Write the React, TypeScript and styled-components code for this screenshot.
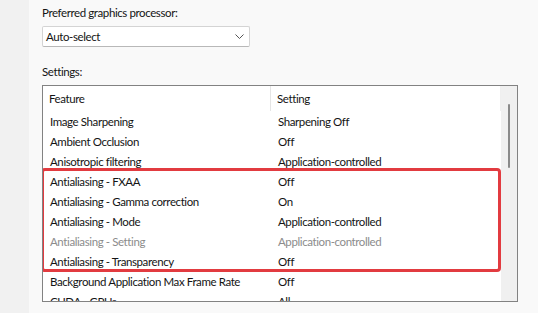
import { createGlobalStyle } from 'styled-components'
import styled from 'styled-components'

type Row = { feature: string; setting: string; disabled?: boolean }

const before: Row[] = [
  { feature: 'Image Sharpening', setting: 'Sharpening Off' },
  { feature: 'Ambient Occlusion', setting: 'Off' },
  { feature: 'Anisotropic filtering', setting: 'Application-controlled' },
]

const antialiasing: Row[] = [
  { feature: 'Antialiasing - FXAA', setting: 'Off' },
  { feature: 'Antialiasing - Gamma correction', setting: 'On' },
  { feature: 'Antialiasing - Mode', setting: 'Application-controlled' },
  { feature: 'Antialiasing - Setting', setting: 'Application-controlled', disabled: true },
  { feature: 'Antialiasing - Transparency', setting: 'Off' },
]

const after: Row[] = [
  { feature: 'Background Application Max Frame Rate', setting: 'Off' },
  { feature: 'CUDA - GPUs', setting: 'All' },
]

const GlobalStyle = createGlobalStyle`
  html, body {
    margin: 0;
    padding: 0;
    background: #f9f9f9;
  }
  body {
    font-family: Lato, 'Noto Sans', sans-serif;
    font-size: 11.5px;
    letter-spacing: -0.4px;
    color: #141414;
  }
`

function SettingRow({ row }: { row: Row }) {
  return (
    <RowLine $disabled={row.disabled}>
      <Cell>{row.feature}</Cell>
      <Cell>{row.setting}</Cell>
    </RowLine>
  )
}

export default function App() {
  return (
    <Page>
      <GlobalStyle />
      <SideStrip />
      <Main>
        <Label>Preferred graphics processor:</Label>
        <Select>
          <span>Auto-select</span>
          <svg width="9" height="5" viewBox="0 0 9 5">
            <path d="M0.5 0.5 L4.5 4.5 L8.5 0.5" fill="none" stroke="#555" strokeWidth="1" />
          </svg>
        </Select>
        <SettingsLabel>Settings:</SettingsLabel>
        <ListBox>
          <ListBody>
            <Header>
              <HeaderCell $first>Feature</HeaderCell>
              <HeaderCell>Setting</HeaderCell>
            </Header>
            {before.map((r) => (
              <SettingRow key={r.feature} row={r} />
            ))}
            <Highlight>
              {antialiasing.map((r) => (
                <SettingRow key={r.feature} row={r} />
              ))}
            </Highlight>
            {after.map((r) => (
              <SettingRow key={r.feature} row={r} />
            ))}
          </ListBody>
          <ScrollTrack>
            <ScrollThumb />
          </ScrollTrack>
        </ListBox>
      </Main>
    </Page>
  )
}

const Page = styled.div`
  display: flex;
  width: 538px;
  height: 313px;
  overflow: hidden;
`

const SideStrip = styled.div`
  width: 29px;
  flex: none;
  background: #f1f1f1;
`

const Main = styled.div`
  flex: 1;
  display: flex;
  flex-direction: column;
  padding: 5px 0 0 13px;
`

const Label = styled.div`
  height: 16px;
  line-height: 16px;
`

const Select = styled.div`
  margin-top: 5px;
  width: 198px;
  height: 19px;
  border: 1px solid #d4d4d4;
  border-bottom-color: #b8b8b8;
  border-radius: 2px;
  background: #fff;
  display: flex;
  align-items: center;
  justify-content: space-between;
  padding: 0 5px 0 3px;
`

const SettingsLabel = styled.div`
  margin-top: 17px;
  height: 16px;
  line-height: 16px;
`

const ListBox = styled.div`
  margin-top: 5px;
  width: 474px;
  height: 215px;
  border: 1px solid #828282;
  background: #fff;
  display: flex;
  overflow: hidden;
`

const ListBody = styled.div`
  flex: 1;
  display: flex;
  flex-direction: column;
`

const Header = styled.div`
  display: grid;
  grid-template-columns: 228px 1fr;
  height: 25px;
  flex: none;
`

const HeaderCell = styled.div<{ $first?: boolean }>`
  display: flex;
  align-items: center;
  padding-left: 6px;
  border-right: 1px solid ${(p) => (p.$first ? '#e5e5e5' : '#efefef')};
`

const RowLine = styled.div<{ $disabled?: boolean }>`
  display: grid;
  grid-template-columns: 228px 1fr;
  height: 20px;
  flex: none;
  color: ${(p) => (p.$disabled ? '#8c8c8c' : '#141414')};
`

const Cell = styled.div`
  display: flex;
  align-items: center;
  padding-left: 7px;
  white-space: nowrap;
`

const Highlight = styled.div`
  position: relative;
  display: flex;
  flex-direction: column;

  &::after {
    content: '';
    position: absolute;
    top: -3px;
    bottom: -1px;
    left: -2px;
    right: 0;
    border: 3px solid #e23b40;
    border-radius: 4px;
    pointer-events: none;
  }
`

const ScrollTrack = styled.div`
  width: 16px;
  flex: none;
  background: #f0f0f0;
  display: flex;
  justify-content: center;
  padding-top: 18px;
`

const ScrollThumb = styled.div`
  width: 2px;
  height: 64px;
  border-radius: 1px;
  background: #8a8a8a;
`
